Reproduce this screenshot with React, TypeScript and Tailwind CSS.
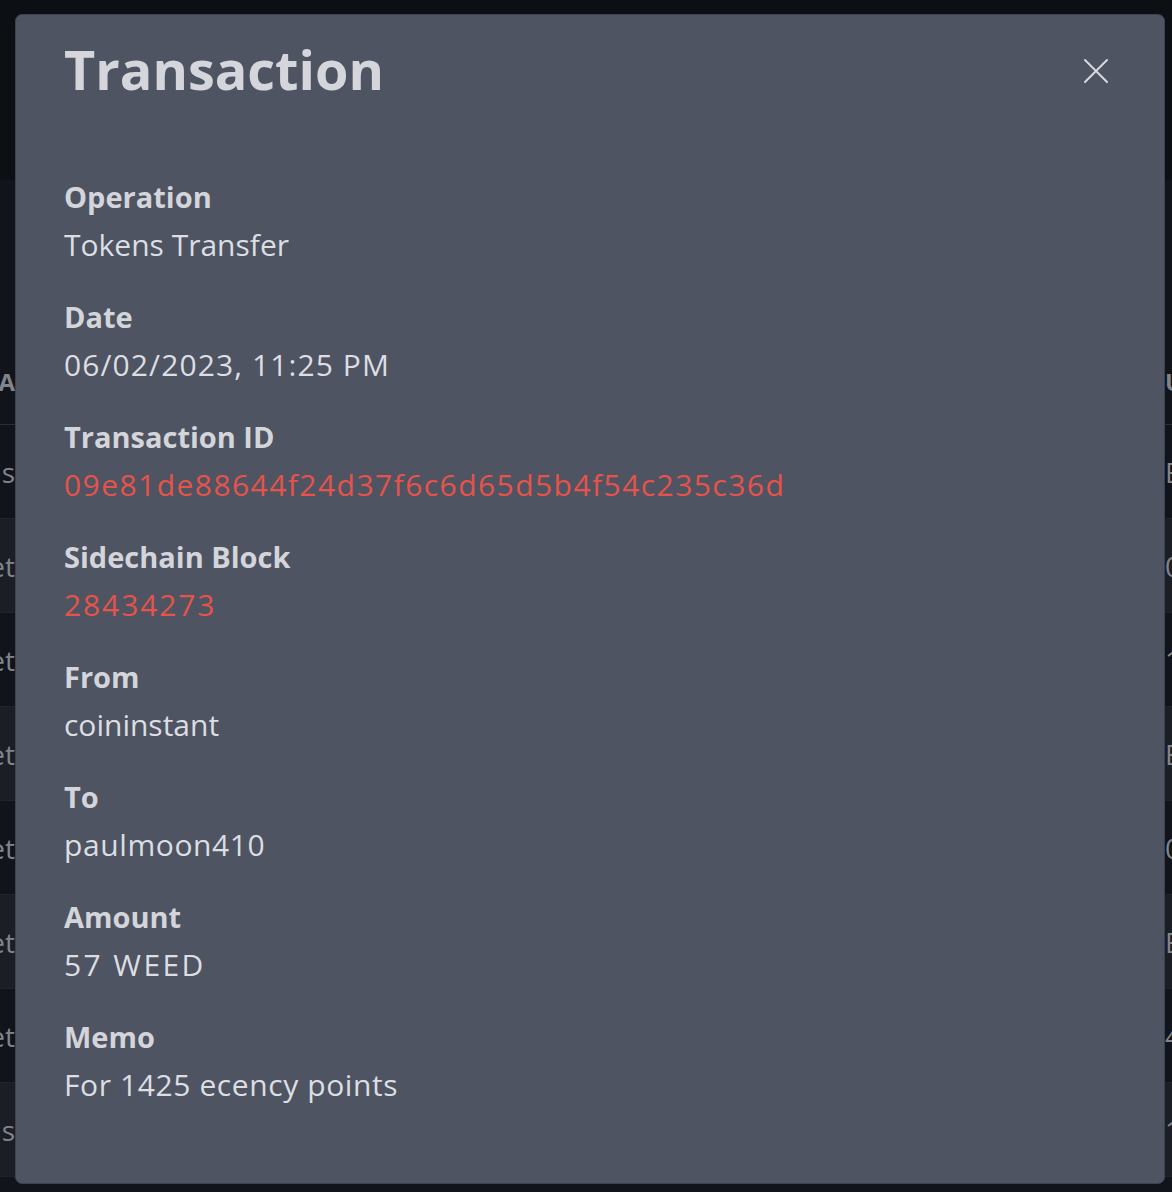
import { X } from "lucide-react";

const rows = [
  { left: "Tokens", right: "B", tone: "dark" },
  { left: "Market", right: "0", tone: "light" },
  { left: "Market", right: "1", tone: "dark" },
  { left: "Market", right: "B", tone: "light" },
  { left: "Market", right: "0", tone: "dark" },
  { left: "Market", right: "B", tone: "light" },
  { left: "Market", right: "4", tone: "dark" },
  { left: "Tokens", right: "1", tone: "light" },
];

// tracking per value to get close to the original rounded face's widths
const fields = [
  { label: "Operation", value: "Tokens Transfer", track: "tracking-normal" },
  { label: "Date", value: "06/02/2023, 11:25 PM", track: "tracking-[1.1px]" },
  { label: "Transaction ID", value: "09e81de88644f24d37f6c6d65d5b4f54c235c36d", link: true, track: "tracking-[1.45px]" },
  { label: "Sidechain Block", value: "28434273", link: true, track: "tracking-[1.9px]" },
  { label: "From", value: "coininstant", track: "tracking-normal" },
  { label: "To", value: "paulmoon410", track: "tracking-[0.6px]" },
  { label: "Amount", value: "57 WEED", track: "tracking-[2.4px]" },
  { label: "Memo", value: "For 1425 ecency points", track: "tracking-[0.6px]" },
];

function Background() {
  return (
    <div className="flex h-[1192px] flex-col overflow-hidden bg-[#11141b] font-['Open_Sans',sans-serif] text-[28px] text-[#80848b]">
      <div className="h-[180px] shrink-0 bg-[#0c0f14]" />
      <div className="h-[160px] shrink-0" />
      {/* table header */}
      <div className="flex h-[85px] shrink-0 items-center justify-between border-b border-[#2a2e36] text-[24px] font-bold">
        <div className="flex w-[15px] justify-end overflow-hidden whitespace-nowrap">TRA</div>
        <div className="w-[7px] overflow-hidden whitespace-nowrap">U</div>
      </div>
      {rows.map((r, i) => (
        <div
          key={i}
          className={`flex h-[94px] shrink-0 items-center justify-between border-b border-[#1f232b] ${
            r.tone === "light" ? "bg-[#1b1e25]" : "bg-[#11141b]"
          }`}
        >
          <div className="flex w-[15px] justify-end overflow-hidden whitespace-nowrap">{r.left}</div>
          <div className="w-[7px] overflow-hidden whitespace-nowrap">{r.right}</div>
        </div>
      ))}
    </div>
  );
}

export default function App() {
  return (
    <div className="relative h-[1192px] w-full overflow-hidden bg-[#0c0f14]">
      <Background />
      <div className="absolute left-[15px] top-[14px] h-[1170px] w-[1150px] rounded-[7px] border border-[#3c4250] bg-[#4e5462] px-[48px] font-['Open_Sans',sans-serif] text-[#d3d5da]">
        <div className="flex items-start justify-between">
          <h1 className="mt-[18px] text-[54px] font-bold leading-[72px] text-[#d4d6db]">
            Transaction
          </h1>
          <button className="-mr-[2px] mt-[34px] text-[#d6d8dc]">
            <X className="h-[44px] w-[44px]" strokeWidth={1.1} />
          </button>
        </div>
        <div className="mt-[68px] flex flex-col gap-[24px]">
          {fields.map((f) => (
            <div key={f.label} className="flex flex-col">
              <div className="text-[29px] font-bold leading-[48px] text-[#d3d5da]">{f.label}</div>
              <div
                className={`text-[30px] leading-[48px] ${f.track} ${
                  f.link ? "text-[#e5534b]" : "text-[#dcdee2]"
                }`}
              >
                {f.value}
              </div>
            </div>
          ))}
        </div>
      </div>
    </div>
  );
}
